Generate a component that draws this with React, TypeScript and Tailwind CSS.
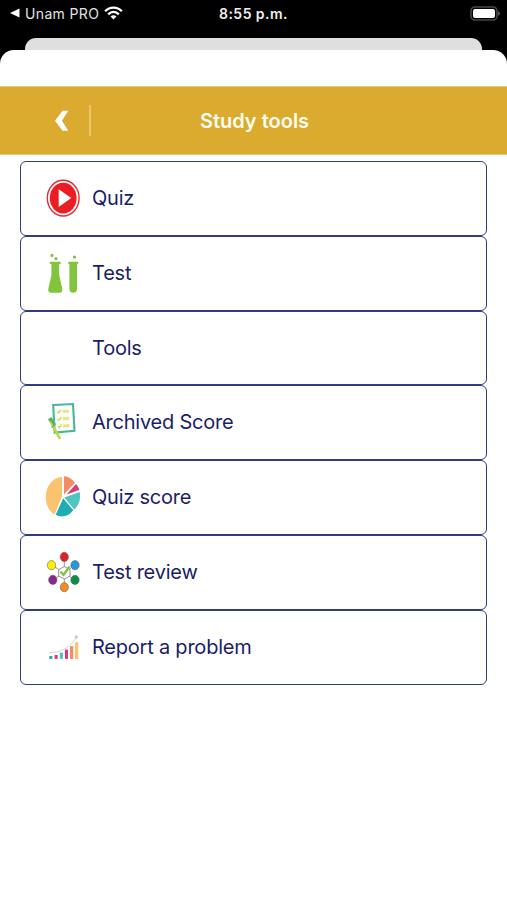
import type { ReactNode } from 'react';

function Icon({ children }: { children?: ReactNode }) {
  return (
    <svg viewBox="0 0 40 44" className="h-11 w-10 shrink-0" fill="none">
      {children}
    </svg>
  );
}

const quiz = (
  <Icon>
    <ellipse cx="20.2" cy="22.1" rx="15.9" ry="17.9" stroke="#e52a30" strokeWidth="1.4" />
    <ellipse cx="20.2" cy="22.1" rx="13.4" ry="15.3" fill="#ec1c24" />
    <path d="M15.7 13.3V31L28.2 22.1Z" fill="#fff" />
  </Icon>
);

const test = (
  <Icon>
    <g fill="#82c53c">
      <circle cx="9" cy="4.4" r="1.6" />
      <circle cx="13" cy="7.7" r="1.6" />
      <circle cx="31.4" cy="6.1" r="1.7" />
      <path d="M7.5 10.7H17Q18 10.7 18 11.8Q18 13 16.2 13V24L19.2 37.5Q20 41.8 16.5 41.8H8Q4.6 41.8 5.4 37.5L8.4 24V13Q6.6 13 6.6 11.8Q6.6 10.7 7.5 10.7Z" />
      <path d="M26 10.7H34.4Q35.4 10.7 35.4 11.8Q35.4 13 34 13V37.7Q34 41.8 30.2 41.8Q26.4 41.8 26.4 37.7V13Q25 13 25 11.8Q25 10.7 26 10.7Z" />
    </g>
  </Icon>
);

const archived = (
  <Icon>
    <path d="M10.2 5L30 4L31.5 30.8L11.7 32.5Z" stroke="#48b797" strokeWidth="2.1" />
    <g stroke="#c9dc55" strokeWidth="1.5">
      <path d="M14.3 11.5l1.2 1.3 2.5-3M14.7 19l1.2 1.3 2.5-3M15.1 26.3l1.2 1.3 2.5-3" />
      <path d="M19.5 11.5l6.5-.4M19.8 18.8l6.5-.4M20 26l6.5-.4" stroke="#e3e987" strokeWidth="3.2" />
    </g>
    <path d="M7 20.5L17 39" stroke="#b9d844" strokeWidth="2.6" />
    <path d="M5.8 20.5L8 19L11.8 25" stroke="#55b36b" strokeWidth="2.8" />
    <path d="M8.5 27.5L12.5 24" stroke="#69ba61" strokeWidth="1.5" />
  </Icon>
);

const score = (
  <Icon>
    <path d="M19 1.8V21.5L11.7 39.3C6 36.5 2.8 30 2.8 22C2.8 11 9.5 2.8 19 1.8Z" fill="#fbc36f" />
    <path d="M21 1.2C25.5 1.5 29 3.9 32 7.8L21 19.5Z" fill="#f58b60" />
    <path d="M33 9C34.5 10.7 35.6 12.7 36.2 15L23.5 19.4Z" fill="#d83c77" />
    <path d="M36.7 17C38.1 23.2 36 30.3 31.3 34.5L21.3 22.5Z" fill="#4ec5c1" />
    <path d="M20.2 23.3L30.3 35.3C25.5 41.8 18.5 43 12.7 39.8Z" fill="#20acb2" />
  </Icon>
);

const review = (
  <Icon>
    <path d="M21.3 9V17M30 16L26.2 19.7M30 29L26.2 26M21.3 35V28.7M11.5 28.5L16 26M10.5 16L16 19.7M21.3 16.5L27 19.7V26L21.3 29L15.7 26V19.7Z" stroke="#898989" strokeWidth=".9" />
    <g stroke="#666" strokeWidth=".6">
      <ellipse cx="21.3" cy="6.9" rx="4.1" ry="4.6" fill="#e51d27" />
      <ellipse cx="32" cy="15.2" rx="4.2" ry="4.6" fill="#2099df" />
      <ellipse cx="32" cy="29.9" rx="4.2" ry="4.6" fill="#079044" />
      <ellipse cx="21.3" cy="37.2" rx="4.1" ry="4.6" fill="#f58c1e" />
      <ellipse cx="9.8" cy="29.9" rx="4.2" ry="4.6" fill="#8b258f" />
      <ellipse cx="8.5" cy="15.2" rx="4.2" ry="4.6" fill="#fff000" />
    </g>
    <path d="M17.5 21.5L20.5 25L26.5 16.5" stroke="#7dc242" strokeWidth="2.3" />
  </Icon>
);

const report = (
  <Icon>
    <path d="M6 27.8C18 27.5 27.5 22.5 33.3 12.5" stroke="#d5d5d5" strokeWidth="1" />
    <circle cx="33.3" cy="12" r="1.8" fill="#ccc" />
    <path d="M6.3 31H9.4V33.9H6.3Z" fill="#21adb1" />
    <path d="M11.6 30H14.7V33.9H11.6Z" fill="#d53b76" />
    <path d="M16.8 27.6H19.9V33.9H16.8Z" fill="#4ac3c0" />
    <path d="M21.9 24.6H25V33.9H21.9Z" fill="#d53b76" />
    <path d="M27 21.2H30.3V33.9H27Z" fill="#f58b60" />
    <path d="M32 17.2H35.3V33.9H32Z" fill="#fbc36f" />
  </Icon>
);

const rows: { label: string; icon: ReactNode }[] = [
  { label: 'Quiz', icon: quiz },
  { label: 'Test', icon: test },
  { label: 'Tools', icon: <Icon /> },
  { label: 'Archived Score', icon: archived },
  { label: 'Quiz score', icon: score },
  { label: 'Test review', icon: review },
  { label: 'Report a problem', icon: report },
];

export default function App() {
  return (
    <div className="flex h-[900px] w-full flex-col overflow-hidden bg-black font-['Inter','Liberation_Sans',sans-serif]">
      <div className="grid h-[38px] shrink-0 grid-cols-3 pt-[3px]">
        <div className="flex h-5 items-center pl-[10px] text-[#e2e2e2]">
          <svg viewBox="0 0 10 10" className="h-[10px] w-[10px]" fill="#fff">
            <path d="M0 5L9.5 .4V9.6Z" />
          </svg>
          <span className="ml-[5px] text-[14px] tracking-[0.35px] whitespace-nowrap">Unam PRO</span>
          <svg viewBox="0 0 20 14" className="ml-[5px] h-[14px] w-[19px] shrink-0" fill="none" stroke="#fff" strokeWidth="2.5">
            <path d="M1.2 5.2C6.2 .1 13.8 .1 18.8 5.2M4.4 8.4C7.8 5.1 12.2 5.1 15.6 8.4" />
            <path d="M6.9 10.6Q10 8.1 13.1 10.6L10 13.8Z" fill="#fff" stroke="none" />
          </svg>
        </div>
        <div className="flex h-5 items-center justify-center text-[14px] font-semibold tracking-[0.45px] text-[#eee]">8:55 p.m.</div>
        <div className="flex h-5 items-center justify-end pr-[6px]">
          <svg viewBox="0 0 31 15" className="h-[15px] w-[31px]" fill="none">
            <rect x="1" y="1" width="26" height="13" rx="4" stroke="#484848" strokeWidth="1.6" />
            <rect x="3" y="3" width="22" height="9" rx="2" fill="#fff" />
            <path d="M28.2 5Q31.5 7.5 28.2 10Z" fill="#666" />
          </svg>
        </div>
      </div>
      <div className="mx-[25px] h-3 shrink-0 rounded-t-[11px] bg-[#dfdfdf]" />
      <div className="flex flex-1 flex-col rounded-t-[14px] bg-white pt-9">
        <header className="grid h-[69px] shrink-0 grid-cols-[92px_1fr_90px] items-center border-y border-[#e6c779] bg-[#daab2f] text-white">
          <div className="flex items-center pl-[54px]">
            <svg viewBox="0 0 15 22" className="h-[22px] w-[15px]" fill="#fff">
              <path d="M8.6 .8H14.3L7.9 10.8L14.3 20.8H8.6L1 10.8Z" />
            </svg>
            <div className="ml-5 h-[31px] w-[1.5px] bg-[#e8c66c]" />
          </div>
          <h1 className="text-center text-[20px] leading-6 font-semibold text-[#fffdf0]">Study tools</h1>
        </header>
        <ul className="mt-[6px] flex flex-col px-5">
          {rows.map(({ label, icon }) => (
            <li key={label} className="flex h-[74.83px] items-center rounded-[6px] border border-[#303b80] pb-px pl-[22px] text-[20px] tracking-[-0.22px] text-[#1b1d68]">
              {icon}
              <span className="ml-[9px]">{label}</span>
            </li>
          ))}
        </ul>
      </div>
    </div>
  );
}
